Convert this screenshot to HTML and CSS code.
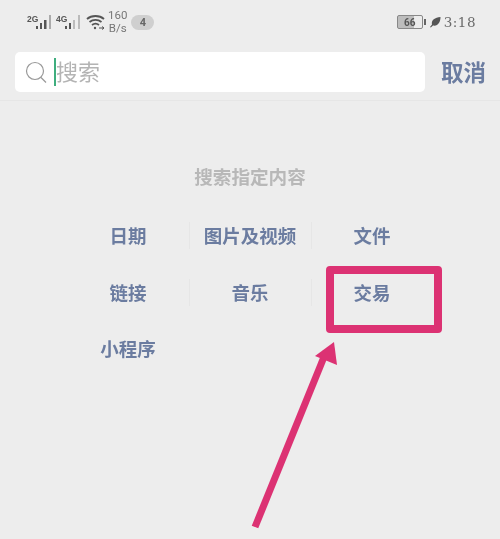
FILE: index.html
```html
<!DOCTYPE html>
<html lang="zh-CN">
<head>
    <meta charset="UTF-8">
    <meta name="viewport" content="width=device-width, initial-scale=1.0">
    <title>搜索</title>
    <link rel="stylesheet" href="styles.css">
</head>
<body>
    <div class="status-bar">
        <div class="status-left">
            <div class="signal">
                <span class="net">2G</span>
                <svg width="17" height="16" viewBox="0 0 17 16">
                    <rect x="1" y="12" width="2" height="3" fill="#555"/>
                    <rect x="5" y="9" width="2" height="6" fill="#555"/>
                    <rect x="9" y="6" width="2.500" height="9" fill="#555"/>
                    <rect x="14" y="1" width="2" height="14" fill="#aaa"/>
                </svg>
            </div>
            <div class="signal">
                <span class="net">4G</span>
                <svg width="17" height="16" viewBox="0 0 17 16">
                    <rect x="1" y="12" width="2" height="3" fill="#555"/>
                    <rect x="5" y="9" width="2" height="6" fill="#555"/>
                    <rect x="9" y="6" width="2" height="9" fill="#bbb"/>
                    <rect x="14" y="1" width="2" height="14" fill="#bbb"/>
                </svg>
            </div>
            <svg class="wifi" width="19" height="16" viewBox="0 0 19 16" fill="none" stroke="#555" stroke-width="1.800">
                <path d="M1 5C5.500 1 13.500 1 18 5"/>
                <path d="M3.500 8C7 5.200 12 5.200 15.500 8"/>
                <path d="M6 11C8 9.500 11 9.500 13 11"/>
                <circle cx="9" cy="14" r="1.200" fill="#555" stroke="none"/>
                <path d="M13 14H18M16 12.500L18 14L16 15.500" stroke-width="1"/>
            </svg>
            <div class="speed"><span>160</span><span>B/s</span></div>
            <span class="badge">4</span>
        </div>
        <div class="status-right">
            <div class="battery"><span class="battery-level">66</span></div>
            <span class="battery-tip"></span>
            <svg class="leaf" width="12" height="12" viewBox="0 0 12 12">
                <path d="M1 11L3 8.500C2 4 6 1.500 11.500 1C11.500 6 9 10.500 4 9.500L1.800 11.500Z" fill="#555"/>
            </svg>
            <span class="clock">3:18</span>
        </div>
    </div>

    <div class="search-row">
        <div class="search-box">
            <svg class="search-icon" width="22" height="24" viewBox="0 0 22 24" fill="none" stroke="#999" stroke-width="1.200">
                <circle cx="10" cy="10" r="8.500"/>
                <path d="M16 16.500L21 21.500"/>
            </svg>
            <span class="caret"></span>
            <span class="placeholder">搜索</span>
        </div>
        <span class="cancel">取消</span>
    </div>

    <div class="content">
        <p class="hint">搜索指定内容</p>
        <div class="types">
            <div class="type">日期</div>
            <div class="type">图片及视频</div>
            <div class="type">文件</div>
            <div class="type">链接</div>
            <div class="type">音乐</div>
            <div class="type">交易</div>
            <div class="type">小程序</div>
        </div>
    </div>

    <!-- red markup on top of the screenshot -->
    <div class="highlight"></div>
    <svg class="arrow" width="500" height="539" viewBox="0 0 500 539">
        <path d="M255 527L326 352" stroke="#dc3273" stroke-width="7" fill="none"/>
        <path d="M334 342L315 356L337 365Z" fill="#dc3273"/>
    </svg>
</body>
</html>
```

FILE: styles.css
```css
body {
    margin: 0;
    width: 500px;
    height: 539px;
    overflow: hidden;
    background: #ededed;
    font-family: "Noto Sans CJK SC", "Liberation Sans", sans-serif;
    position: relative;
}
.status-bar, .search-row, .content, .highlight, .arrow {
    filter: blur(0.4px);
}
.status-bar {
    height: 44px;
    padding: 0 24px 0 27px;
    display: flex;
    justify-content: space-between;
    align-items: center;
    box-sizing: border-box;
}
.status-left, .status-right {
    display: flex;
    align-items: center;
}
.signal {
    display: flex;
    align-items: flex-end;
    width: 29px;
}
.net {
    width: 8px;
    font-family: "Liberation Sans", sans-serif;
    font-size: 8.500px;
    font-weight: bold;
    color: #555;
    align-self: flex-start;
}
.wifi {
    margin-left: 1px;
}
.speed {
    display: flex;
    flex-direction: column;
    align-items: center;
    margin-left: 3px;
    font-family: Roboto, sans-serif;
    font-size: 11.500px;
    line-height: 13px;
    color: #777;
}
.badge {
    width: 23px;
    height: 15px;
    margin-left: 4px;
    border-radius: 8px;
    background: #cfcfcf;
    color: #666;
    font-family: Roboto, sans-serif;
    font-size: 11px;
    font-weight: bold;
    line-height: 15px;
    text-align: center;
}
.battery {
    width: 24px;
    height: 12px;
    border: 1px solid #888;
    border-radius: 2px;
    background: linear-gradient(to right, #bdbdbd 66%, #ececec 66%);
    display: flex;
    align-items: center;
    justify-content: center;
}
.battery-level {
    font-family: Roboto, sans-serif;
    font-size: 10px;
    font-weight: bold;
    color: #555;
}
.battery-tip {
    width: 2px;
    height: 6px;
    margin-left: 1px;
    background: #666;
}
.leaf {
    margin-left: 3px;
}
.clock {
    margin-left: 3px;
    font-family: "DejaVu Serif", serif;
    font-size: 13.500px;
    letter-spacing: 0.500px;
    color: #6a6a6a;
}
.search-row {
    height: 57px;
    padding: 8px 14px 0 15px;
    display: flex;
    align-items: flex-start;
    justify-content: space-between;
    box-sizing: border-box;
    border-bottom: 1px solid #e6e6e6;
}
.search-box {
    width: 410px;
    height: 40px;
    background: #fff;
    border-radius: 5px;
    display: flex;
    align-items: center;
    padding-left: 10px;
    box-sizing: border-box;
}
.search-icon {
    margin-top: 2px;
}
.caret {
    width: 2px;
    height: 28px;
    margin-left: 7px;
    background: #3fae7e;
}
.placeholder {
    font-size: 22px;
    line-height: 40px;
    margin-top: -4px;
    color: #b4b4b4;
}
.cancel {
    height: 40px;
    line-height: 38px;
    font-size: 22.500px;
    font-weight: 700;
    color: #6b7ca0;
}
.content {
    text-align: center;
}
.hint {
    margin: 60px 0 0;
    font-size: 18.600px;
    line-height: 30px;
    font-weight: 700;
    color: #b8b8b8;
}
.types {
    margin: 16px 67px 0;
    display: grid;
    grid-template-columns: repeat(3, 122px);
    grid-auto-rows: 56.500px;
}
.type {
    height: 56.500px;
    line-height: 56.500px;
    font-size: 18.500px;
    font-weight: 700;
    color: #6b7ca0;
    position: relative;
}
.type:not(:nth-child(3n))::after {
    content: "";
    position: absolute;
    right: -1px;
    top: 15px;
    height: 27px;
    width: 1px;
    background: #e6e6e6;
}
.type:last-child::after {
    display: none;
}
.highlight {
    position: absolute;
    left: 326px;
    top: 266px;
    width: 116px;
    height: 67px;
    box-sizing: border-box;
    border: 8px solid #dc3273;
    border-radius: 4px;
}
.arrow {
    position: absolute;
    left: 0;
    top: 0;
}
```
